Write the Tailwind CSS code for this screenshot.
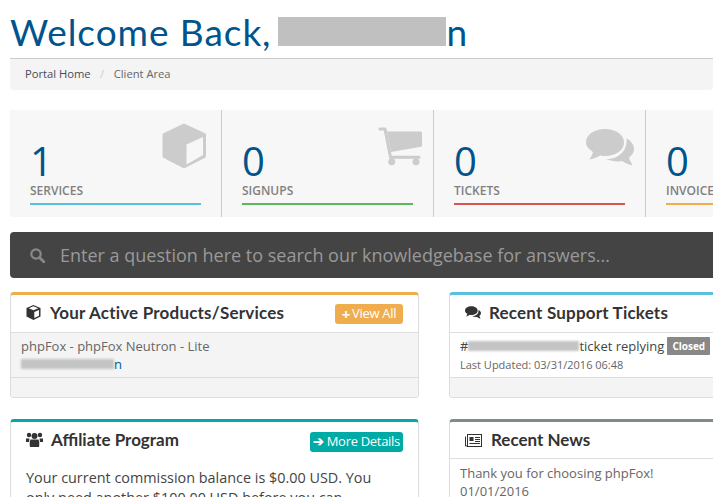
<!DOCTYPE html>
<html lang="en">
	<head>
		<meta charset="UTF-8" />
		<title>Client Area</title>
		<script src="https://cdn.jsdelivr.net/npm/@tailwindcss/browser@4"></script>
	</head>
	<body class="h-[497px] overflow-hidden bg-white font-['Open_Sans',sans-serif] text-[#333]">
		<div class="h-[497px] w-[713px] overflow-hidden pl-[10px]">
			<!-- title -->
			<h1 class="flex h-[58px] items-center pt-[6px] font-['Lato',sans-serif] text-[37px] leading-[40px] tracking-[0.95px] text-[#00548b]">
				<span class="mr-[7px]">Welcome Back,</span>
				<span class="mb-[2px] h-[29px] w-[168px] shrink-0 bg-[#c0c0c0] blur-[0.5px]"></span>
				<span class="tracking-normal">n</span>
			</h1>

			<!-- breadcrumb -->
			<div class="flex h-[32px] w-[703px] items-center rounded-b border-t border-[#ccc] bg-[#f4f4f4] pl-[15px] text-[11.2px]">
				<span class="text-[#4a4a5a]">Portal Home</span>
				<span class="px-[9.500px] text-[#ccc]">/</span>
				<span class="text-[#666]">Client Area</span>
			</div>

			<!-- stat tiles -->
			<div class="mt-[20px] flex h-[107px] w-[703px] overflow-hidden bg-[#f7f7f7]">
				<div class="relative h-full w-[212px] shrink-0 border-r border-[#ccc] pl-[20px] pr-[20px]">
					<svg class="absolute left-[152px] top-[13px] h-[46px] w-[46px]" viewBox="0 0 46 46" fill="#ccc"><path fill-rule="evenodd" stroke="#ccc" stroke-linejoin="round" d="M22 1 43.500 11V34L22 45 1 34V11Z"/><path fill="#f7f7f7" d="M24.500 21.500V41.500L41 32V14Z"/></svg>
					<div class="pt-[31px] text-[40px] leading-[40px] text-[#00548b]">1</div>
					<div class="mt-[2px] text-[12px] font-semibold leading-[16px] text-[#808080]">SERVICES</div>
					<div class="mt-[4px] h-[2px] bg-[#5bc0de]"></div>
				</div>
				<div class="relative h-full w-[212px] shrink-0 border-r border-[#ccc] pl-[20px] pr-[20px]">
					<svg class="absolute left-[156px] top-[17px] h-[40px] w-[46px]" viewBox="0 0 46 40" fill="#ccc"><path d="M2 2H7L12.500 30.200H41" fill="none" stroke="#ccc" stroke-width="3" stroke-linecap="round" stroke-linejoin="round"/><path d="M9 4.500H42.500Q44 4.500 44 6V18.500Q44 19.500 43 19.700L13 25Z"/><circle cx="13.700" cy="34.700" r="3.500"/><circle cx="38" cy="34.700" r="3.500"/></svg>
					<div class="pt-[31px] text-[40px] leading-[40px] text-[#00548b]">0</div>
					<div class="mt-[2px] text-[12px] font-semibold leading-[16px] text-[#808080]">SIGNUPS</div>
					<div class="mt-[4px] h-[2px] bg-[#5cb85c]"></div>
				</div>
				<div class="relative h-full w-[212px] shrink-0 border-r border-[#ccc] pl-[20px] pr-[20px]">
					<svg class="absolute left-[152px] top-[19px] h-[40px] w-[48px]" viewBox="0 0 48 40" fill="#ccc"><path d="M19 0C29.500 0 38 5.500 38 13.500S29.500 27 19 27C17.500 27 16 27 14.500 26.500 11.500 28 8 29.500 3.500 30.500 5 28 6.500 25.500 7 23 3 20 0 17.500 0 13.500 0 5.500 8.500 0 19 0Z"/><path d="M40.500 9C44.500 12 48 15 48 20 48 24 45.500 26.500 43 28.500 43.500 31 45 33.500 46.500 36.500 42 35.500 38.500 33.500 36 32 31 33 25.500 32 20 30 31 30.500 42 23 40.500 9Z"/></svg>
					<div class="pt-[31px] text-[40px] leading-[40px] text-[#00548b]">0</div>
					<div class="mt-[2px] text-[12px] font-semibold leading-[16px] text-[#808080]">TICKETS</div>
					<div class="mt-[4px] h-[2px] bg-[#d9534f]"></div>
				</div>
				<div class="h-full w-[212px] shrink-0 pl-[20px] pr-[20px]">
					<div class="pt-[31px] text-[40px] leading-[40px] text-[#00548b]">0</div>
					<div class="mt-[2px] text-[12px] font-semibold leading-[16px] text-[#808080]">INVOICES</div>
					<div class="mt-[4px] h-[2px] bg-[#f0ad4e]"></div>
				</div>
			</div>

			<!-- kb search -->
			<div class="mt-[15px] flex h-[46px] w-[703px] items-center rounded-l bg-[#444] pl-[20px] text-[18px] text-[#999]">
				<svg class="mr-[15px] h-[15px] w-[15px]" viewBox="0 0 15 15" fill="none" stroke="#888" stroke-width="2.200"><circle cx="6" cy="6" r="4.700"/><path d="M9.500 9.500 14 14" stroke-width="2.800" stroke-linecap="round"/></svg>
				<span class="whitespace-nowrap">Enter a question here to search our knowledgebase for answers...</span>
			</div>

			<!-- panels -->
			<div class="mt-[14px] grid w-[848px] grid-cols-[409px_409px] gap-x-[30px] gap-y-[21px]">
				<div class="h-[106px] overflow-hidden rounded border border-t-[3px] border-[#ddd] border-t-[#f0ad4e] bg-white">
					<div class="flex h-[37px] items-center justify-between pl-[15px] pr-[15px]">
						<h3 class="mb-[2px] flex items-center font-['Lato',sans-serif] text-[17px] font-bold tracking-[0.2px] text-[#333]">
							<svg class="mr-[9px] h-[15px] w-[15px]" viewBox="0 0 15 15" fill="#333"><path fill-rule="evenodd" d="M7.500 0 14.500 3V11.500L7.500 15 .5 11.500V3ZM8.300 7V13L13 10.700V5ZM2.800 3.200 7.500 5.200 12.200 3.200 7.500 1.300Z"/></svg>
							Your Active Products/Services
						</h3>
						<span class="flex h-[20px] w-[68px] items-center justify-center rounded-[3px] bg-[#f0ad4e] text-[13px] tracking-[-0.3px] text-white"><span class="mr-[2px] text-[15px] font-bold leading-[20px]">+</span>View All</span>
					</div>
					<div class="h-[46px] border-y border-[#ddd] bg-[#f4f4f4] px-[10px] pt-[4px] text-[13px] leading-[18px] text-[#666]">
						<div>phpFox - phpFox Neutron - Lite</div>
						<div class="flex items-center"><span class="h-[10px] w-[93px] bg-[#c4c4c4] blur-[1px]"></span><span class="text-[#00548b]">n</span></div>
					</div>
					<div class="h-[19px] bg-[#f4f4f4]"></div>
				</div>

				<div class="h-[106px] overflow-hidden rounded border border-t-[3px] border-[#ddd] border-t-[#5bc0de] bg-white">
					<div class="flex h-[37px] items-center pl-[15px]">
						<h3 class="mb-[2px] flex items-center font-['Lato',sans-serif] text-[17px] font-bold tracking-[0.2px] text-[#333]">
							<svg class="mr-[8px] h-[14px] w-[16px]" viewBox="0 0 48 40" fill="#333"><path d="M19 0C29.500 0 38 5.500 38 13S29.500 26 19 26C17.500 26 16 26 14.500 25.500 11.500 27.500 8 29 3.500 30.500 5 28 6.500 25.500 7 22.500 3 20 0 17 0 13 0 5.500 8.500 0 19 0Z"/><path d="M40.500 11C44.500 13 48 16 48 20.500 48 24 45.500 26.500 43 28.500 43.500 31 45 33.500 46.500 37.500 42 36 38.500 33.500 36 32 31 33 25.500 31.500 21 29 31 29.500 42 24 40.500 11Z"/></svg>
							Recent Support Tickets
						</h3>
					</div>
					<div class="h-[46px] border-y border-[#ddd] px-[10px] pt-[4px] text-[#666]">
						<div class="flex items-center text-[13px] leading-[18px] text-[#444]"><span>#</span><span class="h-[10px] w-[111px] bg-[#c4c4c4] blur-[1px]"></span><span>ticket replying</span><span class="ml-[3px] rounded-[1px] bg-[#888] px-[5px] text-[10px] font-bold leading-[18px] text-white">Closed</span></div>
						<div class="mt-[1px] text-[11px] leading-[18px]">Last Updated: 03/31/2016 06:48</div>
					</div>
					<div class="h-[19px] bg-[#f4f4f4]"></div>
				</div>

				<div class="h-[200px] rounded border border-t-[3px] border-[#ddd] border-t-[#00aaa5] bg-white">
					<div class="flex h-[37px] items-center justify-between pl-[15px] pr-[15px]">
						<h3 class="mb-[2px] flex items-center font-['Lato',sans-serif] text-[17px] font-bold text-[#333]">
							<svg class="mr-[8px] h-[15px] w-[17px]" viewBox="0 0 17 15" fill="#333"><circle cx="3" cy="3" r="2.200"/><circle cx="14" cy="3" r="2.200"/><circle cx="8.500" cy="4" r="3"/><path d="M0 6.500H3.500L3 10H0ZM13.500 6.500H17V10H14ZM4.500 7.500H12.500C13.500 9 13.500 12 13 15H4C3.500 12 3.500 9 4.500 7.500Z"/></svg>
							Affiliate Program
						</h3>
						<span class="mt-[3px] flex h-[20px] w-[93px] items-center justify-center rounded-[3px] bg-[#00aaa5] text-[13px] tracking-[-0.3px] text-white"><span class="mr-[3px] font-bold">➔</span>More Details</span>
					</div>
					<p class="pl-[15px] pr-[30px] pt-[9px] text-[14.400px] leading-[20px] text-[#444]">Your current commission balance is $0.00 USD. You only need another $100.00 USD before you can withdraw your earnings.</p>
				</div>

				<div class="h-[200px] rounded border border-t-[3px] border-[#ddd] border-t-[#7f8c8d] bg-white">
					<div class="flex h-[37px] items-center border-b border-[#ddd] pl-[15px]">
						<h3 class="flex items-center font-['Lato',sans-serif] text-[17px] font-bold text-[#333]">
							<svg class="mr-[9px] h-[13px] w-[17px]" viewBox="0 0 17 13" fill="none" stroke="#333"><rect x="2.500" y=".5" width="14" height="12"/><path d="M.5 2.500V12H2.500"/><rect x="4.500" y="3" width="4" height="4" fill="#333" stroke="none"/><path d="M10 3.500H15M10 5.500H15M10 7.500H15M4.500 9.500H15"/></svg>
							Recent News
						</h3>
					</div>
					<div class="px-[10px] pt-[5px] text-[13px] leading-[18px] text-[#666]">
						<div>Thank you for choosing phpFox!</div>
						<div>01/01/2016</div>
					</div>
				</div>
			</div>
		</div>
	</body>
</html>
